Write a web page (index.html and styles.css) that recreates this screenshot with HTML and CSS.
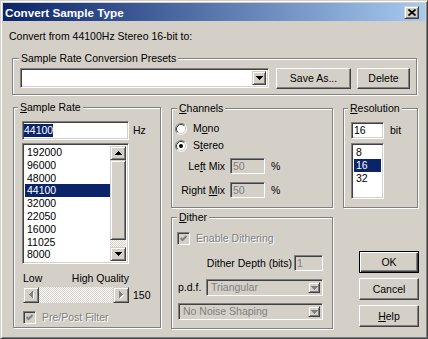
FILE: index.html
```html
<!DOCTYPE html>
<html>

<head>
    <meta charset="UTF-8">
    <title>Convert Sample Type</title>
    <link rel="stylesheet" href="styles.css">
</head>

<body>
    <div id="dialog">
        <div id="titlebar">
            <span id="caption">Convert Sample Type</span>
            <span id="closeBtn" class="raised2">
                <svg width="8" height="7" viewBox="0 0 8 7"><path d="M0.5 0.5L7.5 6.5M7.5 0.5L0.5 6.5" stroke="#000" stroke-width="1.7" fill="none"/></svg>
            </span>
        </div>
        <div id="fromText">Convert from 44100Hz Stereo 16-bit to:</div>

        <div class="group" id="presets">
            <div class="legend">Sample Rate Conversion Presets</div>
            <div class="presetRow">
                <div class="combo sunken" id="presetCombo">
                    <span class="comboText"></span>
                    <span class="dropBtn raised2"><svg width="7" height="4" viewBox="0 0 7 4"><path d="M0 0h7v1h-1v1h-1v1h-1v1h-1v-1h-1v-1h-1v-1h-1z" fill="#000"/></svg></span>
                </div>
                <div class="btn raised" id="saveAsBtn">Save As...</div>
                <div class="btn raised" id="deleteBtn">Delete</div>
            </div>
        </div>

        <div id="lower">
            <!-- sample rate -->
            <div class="group" id="rateGroup">
                <div class="legend"><u>S</u>ample Rate</div>
                <div class="editRow">
                    <div class="edit sunken" id="rateEdit"><span class="sel">44100</span></div>
                    <span class="unit">Hz</span>
                </div>
                <div class="listbox sunken" id="rateList">
                    <ul class="items">
                        <li>192000</li>
                        <li>96000</li>
                        <li>48000</li>
                        <li class="selected">44100</li>
                        <li>32000</li>
                        <li>22050</li>
                        <li>16000</li>
                        <li>11025</li>
                        <li>8000</li>
                        <li>6000</li>
                    </ul>
                    <div class="vscroll">
                        <div class="sbtn raised2"><svg width="7" height="4" viewBox="0 0 7 4"><path d="M3 0h1v1h1v1h1v1h1v1H0V3h1V2h1V1h1z" fill="#000"/></svg></div>
                        <div class="thumb raised2"></div>
                        <div class="track"></div>
                        <div class="sbtn raised2"><svg width="7" height="4" viewBox="0 0 7 4"><path d="M0 0h7v1h-1v1h-1v1h-1v1h-1v-1h-1v-1h-1v-1h-1z" fill="#000"/></svg></div>
                    </div>
                </div>
                <div class="qualityLabels"><span class="low">Low</span><span>High Quality</span></div>
                <div class="sliderRow">
                    <div class="hscroll">
                        <div class="sbtn raised2"><svg width="5" height="8" viewBox="0 0 5 8"><path d="M1 4h1v-1h1v-1h1v-1h1v7h-1v-1h-1v-1h-1v-1h-1z" fill="#fff"/><path d="M0 3h1v-1h1v-1h1v-1h1v7h-1v-1h-1v-1h-1v-1h-1z" fill="#808080"/></svg></div>
                        <div class="track"></div>
                        <div class="sbtn raised2"><svg width="5" height="8" viewBox="0 0 5 8"><path d="M1 1h1v1h1v1h1v1h1v1h-1v1h-1v1h-1v1h-1z" fill="#fff"/><path d="M0 0h1v1h1v1h1v1h1v1h-1v1h-1v1h-1v1h-1z" fill="#808080"/></svg></div>
                    </div>
                    <span class="sliderValue">150</span>
                </div>
                <div class="checkRow">
                    <span class="checkbox sunken"><svg width="9" height="9" viewBox="0 0 9 9"><path d="M1.5 4L3.5 6L7.5 2" stroke="#808080" stroke-width="2" fill="none"/></svg></span>
                    <span class="label disabled">Pre/Post Filter</span>
                </div>
            </div>

            <!-- channels + dither -->
            <div class="colMid">
                <div class="group" id="channels">
                    <div class="legend"><u>C</u>hannels</div>
                    <div class="radioRow first">
                        <svg class="radio" width="12" height="12" viewBox="0 0 12 12">
                            <circle cx="6" cy="6" r="4.5" fill="#fff"/>
                            <path d="M2.11 9.89A5.5 5.5 0 0 1 9.89 2.11" stroke="#808080" fill="none"/>
                            <path d="M2.82 9.18A4.5 4.5 0 0 1 9.18 2.82" stroke="#404040" fill="none"/>
                            <path d="M9.89 2.11A5.5 5.5 0 0 1 2.11 9.89" stroke="#fff" fill="none"/>
                            <path d="M9.18 2.82A4.5 4.5 0 0 1 2.82 9.18" stroke="#d4d0c8" fill="none"/>
                        </svg>
                        <span class="label">M<u>o</u>no</span>
                    </div>
                    <div class="radioRow">
                        <svg class="radio" width="12" height="12" viewBox="0 0 12 12">
                            <circle cx="6" cy="6" r="4.5" fill="#fff"/>
                            <path d="M2.11 9.89A5.5 5.5 0 0 1 9.89 2.11" stroke="#808080" fill="none"/>
                            <path d="M2.82 9.18A4.5 4.5 0 0 1 9.18 2.82" stroke="#404040" fill="none"/>
                            <path d="M9.89 2.11A5.5 5.5 0 0 1 2.11 9.89" stroke="#fff" fill="none"/>
                            <path d="M9.18 2.82A4.5 4.5 0 0 1 2.82 9.18" stroke="#d4d0c8" fill="none"/>
                            <circle cx="6" cy="6" r="2" fill="#000"/>
                        </svg>
                        <span class="label">S<u>t</u>ereo</span>
                    </div>
                    <div class="mixRow first">
                        <span class="mixLabel">Le<u>f</u>t Mix</span>
                        <div class="edit sunken off mixEdit">50</div>
                        <span class="pct">%</span>
                    </div>
                    <div class="mixRow">
                        <span class="mixLabel">Right <u>M</u>ix</span>
                        <div class="edit sunken off mixEdit">50</div>
                        <span class="pct">%</span>
                    </div>
                </div>

                <div class="group" id="dither">
                    <div class="legend"><u>D</u>ither</div>
                    <div class="checkRow" id="ditherCheck">
                        <span class="checkbox sunken"><svg width="9" height="9" viewBox="0 0 9 9"><path d="M1.5 4L3.5 6L7.5 2" stroke="#808080" stroke-width="2" fill="none"/></svg></span>
                        <span class="label disabled">Enable Dithering</span>
                    </div>
                    <div class="depthRow">
                        <span>Dither Depth (bits)</span>
                        <div class="edit sunken off" id="depthEdit">1</div>
                    </div>
                    <div class="pdfRow">
                        <span>p.d.f.</span>
                        <div class="combo sunken off" id="pdfCombo">
                            <span class="comboText">Triangular</span>
                            <span class="dropBtn raised2"><svg width="7" height="4" viewBox="0 0 7 4"><path d="M0 0h7v1h-1v1h-1v1h-1v1h-1v-1h-1v-1h-1v-1h-1z" fill="#808080"/></svg></span>
                        </div>
                    </div>
                    <div class="combo sunken off" id="noiseCombo">
                        <span class="comboText">No Noise Shaping</span>
                        <span class="dropBtn raised2"><svg width="7" height="4" viewBox="0 0 7 4"><path d="M0 0h7v1h-1v1h-1v1h-1v1h-1v-1h-1v-1h-1v-1h-1z" fill="#808080"/></svg></span>
                    </div>
                </div>
            </div>

            <!-- resolution + buttons -->
            <div class="colRight">
                <div class="group" id="resolution">
                    <div class="legend"><u>R</u>esolution</div>
                    <div class="editRow">
                        <div class="edit sunken" id="bitEdit">16</div>
                        <span class="unit">bit</span>
                    </div>
                    <div class="listbox sunken" id="bitList">
                        <ul class="items">
                            <li>8</li>
                            <li class="selected">16</li>
                            <li>32</li>
                        </ul>
                    </div>
                </div>
                <div class="buttons">
                    <div class="btn default">OK</div>
                    <div class="btn raised">Cancel</div>
                    <div class="btn raised"><u>H</u>elp</div>
                </div>
            </div>
        </div>
    </div>
</body>

</html>
```

FILE: styles.css
```css
* {
    box-sizing: border-box;
}

body,
ul {
    margin: 0;
    padding: 0;
}

ul {
    list-style-type: none;
}

body {
    background-color: #d4d0c8;
    font-family: "Liberation Sans", Arial, sans-serif;
    font-size: 10.5px;
    line-height: 13px;
    color: #000;
}

/* 3d borders */
.raised {
    background-color: #d4d0c8;
    border: 1px solid;
    border-color: #fff #404040 #404040 #fff;
    box-shadow: inset -1px -1px #808080;
}

.raised2 {
    background-color: #d4d0c8;
    border: 1px solid;
    border-color: #d4d0c8 #404040 #404040 #d4d0c8;
    box-shadow: inset 1px 1px #fff, inset -1px -1px #808080;
}

.sunken {
    background-color: #fff;
    border: 1px solid;
    border-color: #808080 #fff #fff #808080;
    box-shadow: inset 1px 1px #404040, inset -1px -1px #d4d0c8;
}

.sunken.off {
    background-color: #d4d0c8;
    color: #808080;
}

.disabled {
    color: #808080;
    text-shadow: 1px 1px 0 #fff;
}

#dialog {
    width: 428px;
    height: 339px;
    padding: 2px;
    background-color: #d4d0c8;
    border: 1px solid;
    border-color: #d4d0c8 #404040 #404040 #d4d0c8;
    box-shadow: inset 1px 1px #fff, inset -1px -1px #808080;
}

#titlebar {
    display: flex;
    align-items: center;
    justify-content: space-between;
    height: 18px;
    padding-left: 2px;
    background: linear-gradient(to right, #0a246a, #a6caf0);
}

#caption {
    color: #fff;
    font-weight: bold;
    font-size: 11.7px;
}

#closeBtn {
    display: flex;
    align-items: center;
    justify-content: center;
    width: 15px;
    height: 13px;
    margin-right: 6px;
}

#closeBtn svg {
    display: block;
}

#fromText {
    margin: 9px 0 0 6px;
}

/* group boxes */
.group {
    flex-shrink: 0;
    border: 1px solid #808080;
    box-shadow: inset 1px 1px #fff, 1px 1px #fff;
}

.legend {
    width: fit-content;
    margin-top: -7px;
    padding: 0 2px;
    background-color: #d4d0c8;
    line-height: 13px;
}

#presets {
    width: 405px;
    height: 37px;
    margin: 15px 0 0 9px;
    padding-left: 7px;
}

#presets .legend {
    margin-left: -1px;
}

.presetRow {
    display: flex;
    align-items: flex-start;
    margin-top: 3px;
}

.combo {
    display: flex;
    align-items: stretch;
    padding: 2px;
}

.comboText {
    flex: 1;
    padding-left: 2px;
    white-space: nowrap;
    overflow: hidden;
    display: flex;
    align-items: center;
}

.dropBtn {
    display: flex;
    align-items: center;
    justify-content: center;
    width: 14px;
}

.dropBtn svg,
.sbtn svg {
    display: block;
}

#presetCombo {
    width: 249px;
    height: 20px;
}

.btn {
    display: flex;
    align-items: center;
    justify-content: center;
    flex-shrink: 0;
}

#saveAsBtn {
    width: 75px;
    height: 21px;
    margin-left: 7px;
}

#deleteBtn {
    width: 53px;
    height: 21px;
    margin-left: 6px;
}

/* lower part */
#lower {
    display: flex;
    align-items: flex-start;
    margin: 12px 0 0 10px;
}

#rateGroup {
    width: 148px;
    height: 221px;
    padding-left: 8px;
}

#rateGroup .legend {
    margin-left: -4px;
}

.editRow {
    display: flex;
    align-items: center;
    margin-top: 7px;
}

.edit {
    display: flex;
    align-items: center;
    padding-left: 2px;
}

#rateEdit {
    width: 107px;
    height: 19px;
    padding-left: 1px;
}

.sel {
    background-color: #0a246a;
    color: #fff;
}

.unit {
    margin-left: 4px;
}

.listbox {
    display: flex;
    padding: 2px;
    overflow: hidden;
}

.items {
    flex: 1;
    overflow: hidden;
}

.items li {
    line-height: 12.8px;
    padding-left: 2px;
    white-space: nowrap;
}

.items li.selected {
    background-color: #0a246a;
    color: #fff;
}

#rateList {
    width: 107px;
    height: 121px;
    margin-top: 3px;
}

.vscroll {
    display: flex;
    flex-direction: column;
    width: 16px;
}

.sbtn {
    display: flex;
    align-items: center;
    justify-content: center;
    flex-shrink: 0;
}

.vscroll .sbtn {
    height: 14px;
}

.vscroll .thumb {
    height: 80px;
}

.track {
    flex: 1;
    background: repeating-conic-gradient(#fff 0 25%, #d4d0c8 0 50%) 0 0 / 2px 2px;
}

.qualityLabels {
    display: flex;
    justify-content: space-between;
    width: 107px;
    margin-top: 8px;
}

.qualityLabels .low {
    padding-left: 1px;
}

.sliderRow {
    display: flex;
    align-items: center;
    margin-top: 2px;
}

.hscroll {
    display: flex;
    width: 106px;
    height: 16px;
    margin-left: 1px;
}

.hscroll .sbtn {
    width: 16px;
}

.sliderValue {
    margin-left: 4px;
}

.checkRow {
    display: flex;
    align-items: center;
    height: 13px;
    margin-top: 8px;
}

.checkbox {
    display: block;
    width: 13px;
    height: 13px;
    padding: 1px;
    background-color: #d4d0c8;
}

.checkbox svg {
    display: block;
}

.checkRow .label {
    margin-left: 6px;
}

#rateGroup .checkbox {
    margin-left: 1px;
}

/* channels / dither */
.colMid {
    display: flex;
    flex-direction: column;
    margin: 1px 0 0 10px;
}

#channels {
    width: 162px;
    height: 100px;
    padding-left: 3px;
}

#channels .legend {
    margin-left: 2px;
}

.radioRow {
    display: flex;
    align-items: center;
    height: 17px;
}

.radioRow.first {
    margin-top: 5px;
}

.radio {
    display: block;
}

.radioRow .label {
    margin-left: 6px;
}

.mixRow {
    display: flex;
    align-items: center;
    height: 16px;
    margin-top: 8px;
}

.mixRow.first {
    margin-top: 4px;
}

.mixLabel {
    width: 50px;
    text-align: right;
}

.mixEdit {
    width: 35px;
    height: 16px;
    margin-left: 5px;
}

.pct {
    margin-left: 6px;
}

#dither {
    width: 162px;
    height: 112px;
    margin-top: 9px;
    padding: 0 9px 0 6px;
}

#dither .legend {
    margin-left: -1px;
}

#ditherCheck {
    height: 17px;
    margin-top: 6px;
}

#ditherCheck .checkbox {
    margin-left: -1px;
}

.depthRow {
    display: flex;
    align-items: center;
    justify-content: flex-end;
    height: 16px;
    margin-top: 8px;
}

#depthEdit {
    width: 29px;
    height: 16px;
    margin-left: 2px;
}

.pdfRow {
    display: flex;
    align-items: center;
    justify-content: space-between;
    margin-top: 8px;
}

#pdfCombo {
    width: 117px;
    height: 17px;
}

#noiseCombo {
    width: 145px;
    height: 17px;
    margin-top: 7px;
}

#dither .dropBtn {
    width: 12px;
}

/* resolution / buttons */
.colRight {
    display: flex;
    flex-direction: column;
    margin: 1px 0 0 10px;
}

#resolution {
    width: 75px;
    height: 100px;
    padding-left: 7px;
}

#resolution .legend {
    margin-left: -3px;
}

#bitEdit {
    width: 33px;
    height: 17px;
}

#resolution .unit {
    margin-left: 6px;
}

#bitList {
    width: 33px;
    height: 56px;
    margin-top: 4px;
}

.buttons {
    display: flex;
    flex-direction: column;
    gap: 5px;
    margin: 43px 0 0 16px;
}

.buttons .btn {
    width: 60px;
    height: 22px;
}

.btn.default {
    background-color: #d4d0c8;
    border: 1px solid #000;
    box-shadow: inset 1px 1px #fff, inset -1px -1px #404040, inset -2px -2px #808080;
}
```
